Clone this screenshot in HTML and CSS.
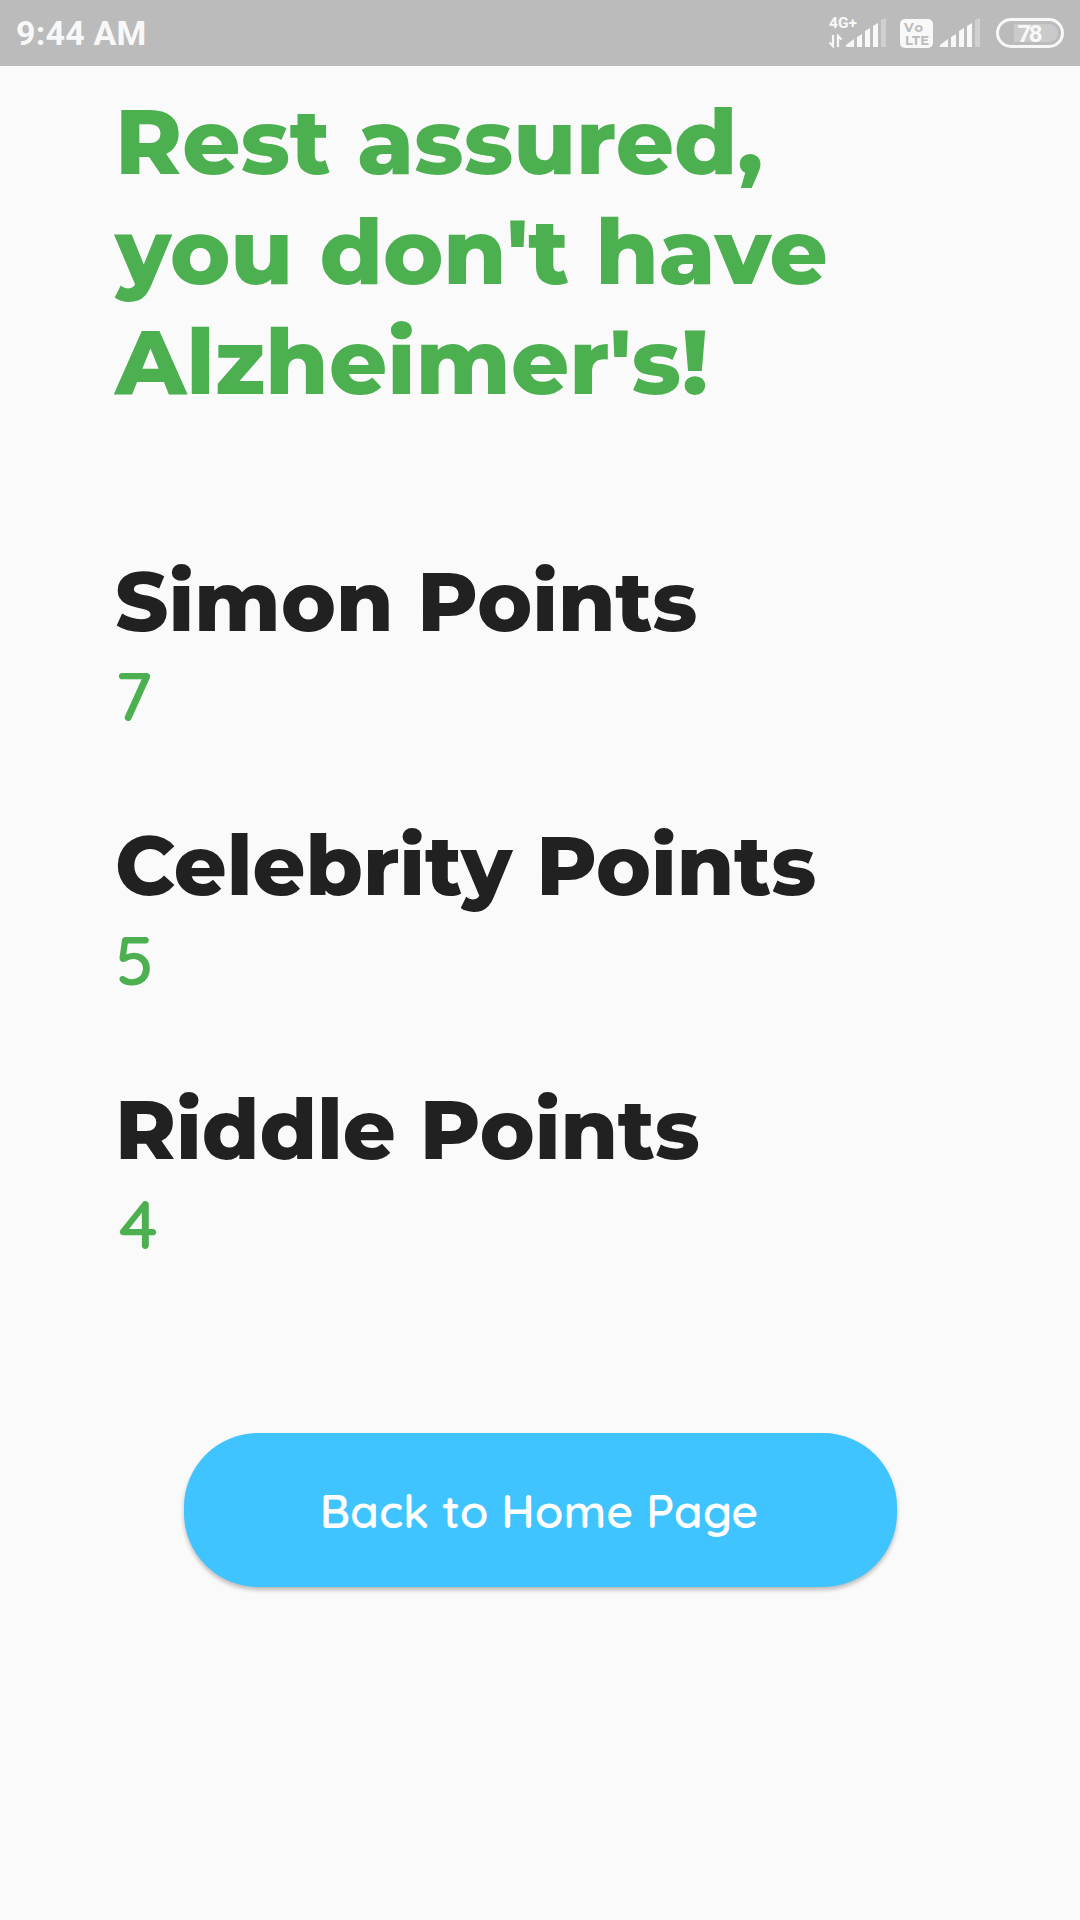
FILE: index.html
```html
<!DOCTYPE html>
<html lang="en">
<head>
    <meta charset="UTF-8">
    <meta name="viewport" content="width=device-width, initial-scale=1.0">
    <title>Results</title>
    <link rel="stylesheet" href="styles.css">
</head>
<body>
    <header class="status-bar">
        <span class="time">9:44 AM</span>
        <svg class="status-icons" width="260" height="66" viewBox="0 0 260 66">
            <text class="network" x="9" y="28" textLength="28">4G+</text>
            <path class="arrows" d="M13 35V46L9.5 42.500M18 47V36L21.500 39.500"/>
            <g class="bars">
                <path d="M26 47V45L34 39V47ZM37 47V37L42 34V47ZM45 47V31L50 28V47ZM53 47V26L58 23V47Z"/>
                <path class="off" d="M61 47V20L66 18V47Z"/>
            </g>
            <rect class="volte" x="80" y="19" width="33" height="29" rx="5"/>
            <text class="volte-text" x="84" y="32" textLength="19">Vo</text>
            <text class="volte-text" x="85" y="45" textLength="24">LTE</text>
            <g class="bars" transform="translate(94 0)">
                <path d="M26 47V45L34 39V47ZM37 47V37L42 34V47ZM45 47V31L50 28V47ZM53 47V26L58 23V47Z"/>
                <path class="off" d="M61 47V20L66 18V47Z"/>
            </g>
            <rect class="battery" x="177.5" y="19.5" width="65" height="27" rx="13.5"/>
            <path class="level" d="M194 24H229A9 9 0 0 1 229 42H194Z"/>
            <text class="percent" x="197.5" y="42" textLength="25">78</text>
        </svg>
    </header>
    <main class="results">
        <h1>Rest assured,<br>you don't have<br>Alzheimer's!</h1>
        <section class="score">
            <h2>Simon Points</h2>
            <p>7</p>
        </section>
        <section class="score">
            <h2>Celebrity Points</h2>
            <p>5</p>
        </section>
        <section class="score riddle">
            <h2>Riddle Points</h2>
            <p>4</p>
        </section>
        <button class="home">Back to Home Page</button>
    </main>
</body>
</html>
```
FILE: styles.css
```css
body {
    margin: 0;
    background: #fafafa;
    color: #212121;
    font-family: Montserrat, Inter, sans-serif;
}
.status-bar {
    display: flex;
    justify-content: space-between;
    align-items: center;
    box-sizing: border-box;
    height: 66px;
    padding-left: 16px;
    background: #bbb;
    color: #f8f8f8;
    font-family: Roboto, sans-serif;
}
.time {
    font-size: 34px;
    font-weight: 700;
    line-height: 66px;
    letter-spacing: 0.2px;
}
.status-icons {
    flex: none;
}
.results {
    padding: 21px 115px 40px;
}
h1, h2, p {
    margin: 0;
}
h1 {
    height: 330px;
    margin-bottom: 135px;
    color: #4caf50;
    font-size: 90.75px;
    font-weight: 800;
    line-height: 110px;
    white-space: nowrap;
}
.score {
    height: 264px;
}
h2 {
    font-size: 82.5px;
    font-weight: 800;
    line-height: 100px;
    white-space: nowrap;
}
p {
    color: #4caf50;
    font-family: Quicksand, Inter, sans-serif;
    font-size: 68.75px;
    font-weight: 600;
    line-height: 86px;
}
.riddle p {
    padding-left: 4px;
}
.home {
    display: block;
    width: 713px;
    height: 154px;
    margin: 89px 0 0 69px;
    padding: 0 3px 0 0;
    border: none;
    border-radius: 74px;
    background: #40c4ff;
    box-shadow: 0 3px 4px rgba(0, 0, 0, 0.25);
    color: white;
    font-family: Quicksand, Inter, sans-serif;
    font-size: 46.5px;
    font-weight: 600;
}
.network {
    fill: #f8f8f8;
    font-size: 15.5px;
    font-weight: 700;
}
.bars {
    fill: #f8f8f8;
}
.bars .off {
    fill: #d0d0d0;
}
.arrows {
    fill: none;
    stroke: #f8f8f8;
    stroke-width: 2.2;
}
.volte {
    fill: #f8f8f8;
}
.volte-text {
    fill: #bbb;
    font-family: Montserrat, Inter, sans-serif;
    font-size: 13px;
    font-weight: 700;
}
.battery {
    fill: none;
    stroke: #f8f8f8;
    stroke-width: 3;
}
.level {
    fill: #cacaca;
}
.percent {
    fill: #f8f8f8;
    font-size: 24px;
    font-weight: 700;
}
```
